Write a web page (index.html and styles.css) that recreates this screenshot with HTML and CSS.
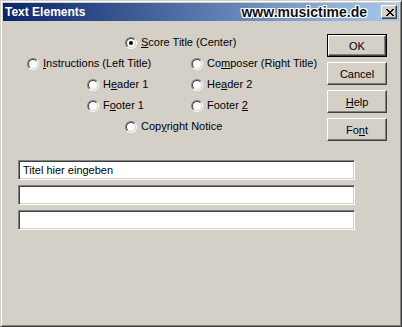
FILE: index.html
```html
<!DOCTYPE html>
<html>
<head>
<meta charset="utf-8">
<link rel="stylesheet" href="styles.css">
</head>
<body>
<div class="window">
  <div class="titlebar">
    <span class="title">Text Elements</span>
    <span class="site">www.musictime.de</span>
    <span class="close"><svg width="8" height="7" viewBox="0 0 8 7" shape-rendering="crispEdges"><path fill="#000" d="M0 0h2v1H0z M6 0h2v1H6z M1 1h2v1H1z M5 1h2v1H5z M2 2h4v1H2z M3 3h2v1H3z M2 4h4v1H2z M1 5h2v1H1z M5 5h2v1H5z M0 6h2v1H0z M6 6h2v1H6z"/></svg></span>
  </div>
  <div class="client">
    <div class="left">
      <div class="options">
        <div class="row r-center">
          <div class="opt"><span class="radio checked"></span><span class="lbl"><u>S</u>core Title (Center)</span></div>
        </div>
        <div class="row r-wide">
          <div class="opt w-wide"><span class="radio"></span><span class="lbl"><u>I</u>nstructions (Left Title)</span></div>
          <div class="opt"><span class="radio"></span><span class="lbl">Co<u>m</u>poser (Right Title)</span></div>
        </div>
        <div class="row r-mid">
          <div class="opt w-mid"><span class="radio"></span><span class="lbl">H<u>e</u>ader 1</span></div>
          <div class="opt"><span class="radio"></span><span class="lbl">He<u>a</u>der 2</span></div>
        </div>
        <div class="row r-mid">
          <div class="opt w-mid"><span class="radio"></span><span class="lbl">F<u>o</u>oter 1</span></div>
          <div class="opt"><span class="radio"></span><span class="lbl">Footer <u>2</u></span></div>
        </div>
        <div class="row r-center">
          <div class="opt"><span class="radio"></span><span class="lbl">Cop<u>y</u>right Notice</span></div>
        </div>
      </div>
      <div class="fields">
        <div class="field">Titel hier eingeben</div>
        <div class="field"></div>
        <div class="field"></div>
      </div>
    </div>
    <div class="buttons">
      <div class="btn default"><span class="face">OK</span></div>
      <div class="btn"><span class="face">Cancel</span></div>
      <div class="btn"><span class="face"><u>H</u>elp</span></div>
      <div class="btn"><span class="face">Fo<u>n</u>t</span></div>
    </div>
  </div>
</div>
</body>
</html>
```
FILE: styles.css
```css
html, body {
  margin: 0;
  padding: 0;
  background: #d4d0c8;
}
.window {
  box-sizing: border-box;
  width: 402px;
  height: 327px;
  background: #d4d0c8;
  border: 1px solid;
  border-color: #d4d0c8 #404040 #404040 #d4d0c8;
  box-shadow: inset 1px 1px 0 #ffffff, inset -1px -1px 0 #808080;
  padding: 2px;
  font-family: "Liberation Sans", Arial, sans-serif;
  font-size: 11px;
  color: #000;
}
.titlebar {
  height: 18px;
  display: flex;
  align-items: center;
  background: linear-gradient(to right, #0a246a, #a6caf0);
}
.title {
  color: #fff;
  font-weight: bold;
  font-size: 12px;
  padding-left: 2px;
  flex: 1;
}
.site {
  font-weight: bold;
  font-size: 14px;
  color: #111;
  margin-right: 14px;
  text-shadow: 1px 0 0 #fff, -1px 0 0 #fff, 0 1px 0 #fff, 0 -1px 0 #fff, 1px 1px 0 #fff, -1px -1px 0 #fff, 1px -1px 0 #fff, -1px 1px 0 #fff;
}
.close {
  box-sizing: border-box;
  width: 16px;
  height: 14px;
  margin-right: 2px;
  background: #d4d0c8;
  border: 1px solid;
  border-color: #ffffff #404040 #404040 #ffffff;
  box-shadow: inset -1px -1px 0 #808080;
  display: flex;
  align-items: flex-start;
  padding: 3px 0 0 4px;
}
.close svg { display: block; }
.client {
  display: flex;
}
.left {
  width: 324px;
}
.options {
  margin-top: 11px;
}
.row {
  height: 21px;
  display: flex;
  align-items: center;
}
.r-center { padding-left: 122px; }
.r-wide { padding-left: 24px; }
.r-mid { padding-left: 84px; }
.opt {
  display: flex;
  align-items: center;
  gap: 4px;
}
.w-wide { width: 164px; }
.w-mid { width: 104px; }
.lbl {
  white-space: nowrap;
  line-height: 13px;
}
.radio {
  box-sizing: border-box;
  width: 12px;
  height: 12px;
  border-radius: 50%;
  border: 1px solid;
  border-color: #808080 #ffffff #ffffff #808080;
  position: relative;
  flex: none;
}
.radio::before {
  content: "";
  position: absolute;
  inset: 0;
  box-sizing: border-box;
  border-radius: 50%;
  border: 1px solid;
  border-color: #404040 #d4d0c8 #d4d0c8 #404040;
  background: #fff;
}
.radio.checked::after {
  content: "";
  position: absolute;
  left: 3px;
  top: 3px;
  width: 4px;
  height: 4px;
  border-radius: 50%;
  background: #000;
}
.fields {
  margin-top: 23px;
  margin-left: 15px;
  display: flex;
  flex-direction: column;
  gap: 5px;
}
.field {
  box-sizing: border-box;
  width: 337px;
  height: 20px;
  background: #fff;
  border: 1px solid;
  border-color: #808080 #ffffff #ffffff #808080;
  box-shadow: inset 1px 1px 0 #404040, inset -1px -1px 0 #d4d0c8;
  padding: 0 4px;
  display: flex;
  align-items: center;
  white-space: nowrap;
}
.buttons {
  margin-top: 13px;
  display: flex;
  flex-direction: column;
  gap: 5px;
}
.btn {
  box-sizing: border-box;
  width: 60px;
  height: 23px;
  display: flex;
}
.btn .face {
  flex: 1;
  border: 1px solid;
  border-color: #ffffff #404040 #404040 #ffffff;
  box-shadow: inset -1px -1px 0 #808080;
  display: flex;
  align-items: center;
  justify-content: center;
}
.btn.default {
  border: 1px solid #000;
}
```
